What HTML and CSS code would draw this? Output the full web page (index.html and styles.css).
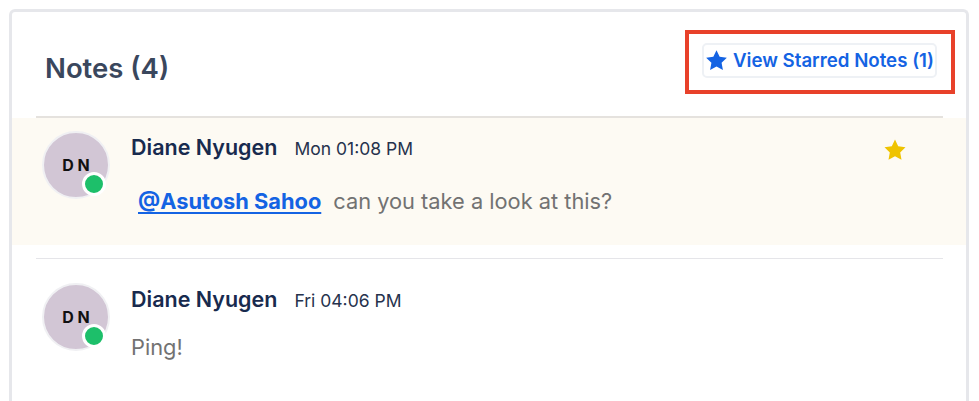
FILE: index.html
```html
<!DOCTYPE html>
<html lang="en">
<head>
    <meta charset="UTF-8">
    <title>Notes</title>
    <link rel="stylesheet" href="styles.css">
</head>
<body>
    <div class="card">
        <div class="card-head">
            <h2 class="title">Notes (4)</h2>
            <div class="highlight-box">
                <button class="starred-btn">
                    <svg class="star-icon" viewBox="0 0 24 24" width="23" height="23"><path d="M12 1.2l3.3 6.9 7.5 1-5.5 5.3 1.4 7.5L12 18.3l-6.7 3.6 1.4-7.5L1.2 9.1l7.5-1z" fill="#1463e3"/></svg>
                    <span>View Starred Notes (1)</span>
                </button>
            </div>
        </div>

        <div class="divider"></div>
        <div class="note note-starred">
            <div class="avatar">
                D N
                <span class="status"></span>
            </div>
            <div class="note-body">
                <div class="note-meta">
                    <span class="author">Diane Nyugen</span>
                    <span class="time">Mon 01:08 PM</span>
                </div>
                <p class="message message-mention"><a class="mention" href="#">@Asutosh Sahoo</a>can you take a look at this?</p>
            </div>
            <svg class="note-star" viewBox="0 0 24 24" width="24" height="24"><path d="M12 1.5l3.2 6.8 7.3 1-5.3 5.1 1.3 7.3L12 18.2l-6.5 3.5 1.3-7.3-5.3-5.1 7.3-1z" fill="#efc300"/></svg>
        </div>

        <div class="divider divider-light"></div>
        <div class="note">
            <div class="avatar">
                D N
                <span class="status"></span>
            </div>
            <div class="note-body">
                <div class="note-meta">
                    <span class="author">Diane Nyugen</span>
                    <span class="time">Fri 04:06 PM</span>
                </div>
                <p class="message">Ping!</p>
            </div>
        </div>
    </div>
</body>
</html>
```

FILE: styles.css
```css
body {
    margin: 9px 0 0 9px;
    background: #fff;
    font-family: Inter, "Noto Sans", Arial, sans-serif;
}
.card {
    width: 960px;
    height: 420px;
    box-sizing: border-box;
    border: 3px solid #e6e7eb;
    border-bottom: none;
    border-radius: 6px 6px 0 0;
    background: #fff;
}
.card-head {
    display: flex;
    justify-content: space-between;
    align-items: flex-start;
    padding: 18px 11px 22px 33px;
}
.title {
    margin: 22px 0 0;
    font-size: 27.5px;
    line-height: 32px;
    font-weight: 600;
    color: #3a475d;
}
.highlight-box {
    border: 4px solid #e8412a;
    padding: 9px 14px 12px 13px;
}
.starred-btn {
    display: flex;
    align-items: center;
    gap: 5px;
    height: 35px;
    box-sizing: border-box;
    padding: 0 1px;
    border: 2px solid #eef1f5;
    border-radius: 5px;
    background: #fff;
    font-family: inherit;
    font-size: 18.7px;
    font-weight: 600;
    color: #1463e3;
    cursor: pointer;
}
.divider {
    height: 2px;
    margin: 0 23px 0 24px;
    background: #e5e2de;
}
.divider-light {
    margin-top: 13px;
    height: 1px;
    background: #e5e5e9;
}
.note {
    display: flex;
    align-items: flex-start;
    padding: 24px 59px 28px 30px;
}
.note-starred {
    padding-top: 13px;
    background: #fdfaf3;
    height: 127px;
    box-sizing: border-box;
}
.avatar {
    position: relative;
    width: 68px;
    height: 68px;
    box-sizing: border-box;
    border: 2px solid #f0f0f3;
    border-radius: 50%;
    background: #d2c6d5;
    display: flex;
    align-items: center;
    justify-content: center;
    font-size: 16px;
    font-weight: 700;
    color: #111;
    flex-shrink: 0;
}
.status {
    position: absolute;
    left: 38px;
    top: 39px;
    width: 18px;
    height: 18px;
    border: 3px solid #fff;
    border-radius: 50%;
    background: #1dbf6a;
}
.note-body {
    flex: 1;
    margin-left: 21px;
    padding-top: 4px;
}
.note-meta {
    display: flex;
    align-items: baseline;
    gap: 17px;
    line-height: 24px;
}
.author {
    font-size: 21.5px;
    font-weight: 600;
    color: #182a4e;
}
.time {
    font-size: 17.5px;
    color: #26324d;
}
.message {
    margin: 20px 0 0;
    font-size: 21.8px;
    line-height: 28px;
    color: #727272;
}
.message-mention {
    margin-top: 26px;
}
.mention {
    margin: 0 12px 0 7px;
    font-weight: 700;
    color: #1463e3;
    text-decoration: underline;
    text-underline-offset: 3px;
}
.note-star {
    margin-top: 7px;
}
```
